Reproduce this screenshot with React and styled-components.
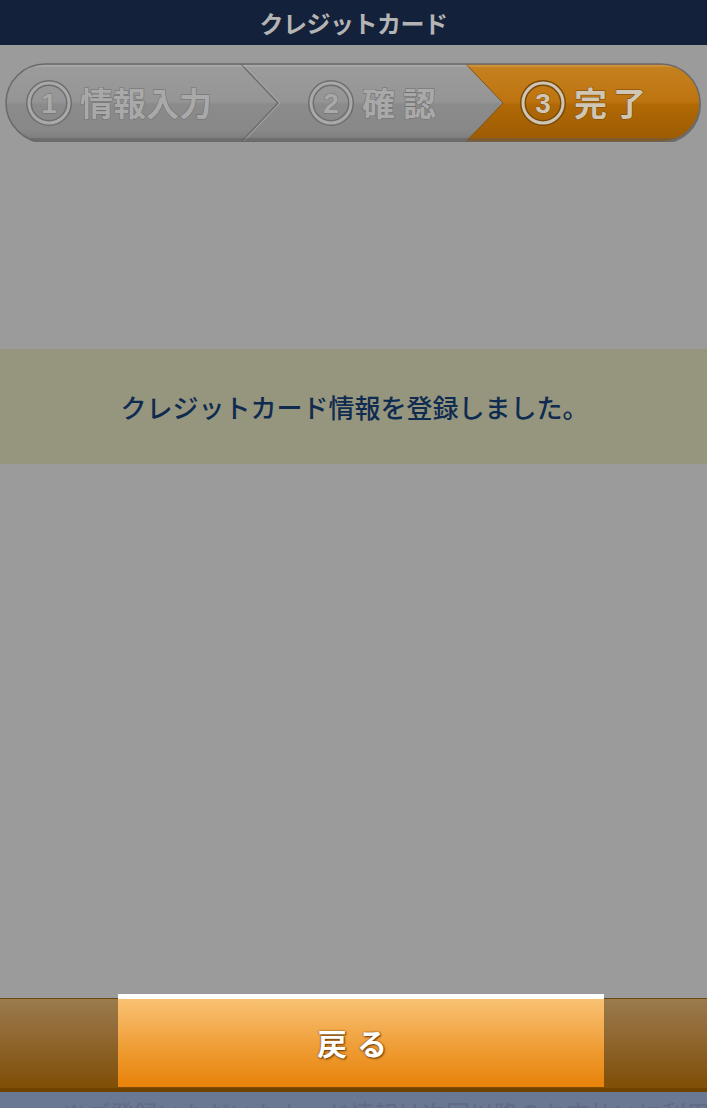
import React from "react";
import styled, { createGlobalStyle } from "styled-components";

const GlobalStyle = createGlobalStyle`
  html, body {
    margin: 0;
    padding: 0;
    background: #9b9b9b;
  }
  body {
    font-family: "Noto Sans CJK JP", "Noto Sans", sans-serif;
  }
`;

const Page = styled.div`
  display: flex;
  flex-direction: column;
  width: 707px;
  height: 1108px;
  overflow: hidden;
`;

const Header = styled.header`
  height: 45px;
  flex: none;
  display: flex;
  align-items: center;
  justify-content: center;
  background: #13213a;
  color: #b4b4b4;
  font-size: 24px;
  font-weight: 700;
  letter-spacing: -0.5px;
`;

const Content = styled.main`
  flex: none;
  height: 953px;
  box-sizing: border-box;
  display: flex;
  flex-direction: column;
  padding-top: 15px;
  background: #9b9b9b;
`;

const StepBar = styled.svg`
  display: block;
  width: 707px;
  height: 82px;
  flex: none;
`;

const Notice = styled.div`
  margin-top: 207px;
  height: 115px;
  display: flex;
  align-items: center;
  justify-content: center;
  background: #96967e;
  color: #0f2b50;
  font-size: 26px;
  font-weight: 500;
  padding-left: 2px;
`;

const Footer = styled.footer`
  flex: none;
  height: 89px;
  display: flex;
  padding-left: 118px;
  border-top: 1px solid #6a4610;
  border-bottom: 4px solid #6e4300;
  background: linear-gradient(#9b7a4c 0%, #926b36 35%, #7f4e06 100%);
`;

const BackButton = styled.button`
  width: 486px;
  height: 93px;
  margin-top: -5px;
  border: none;
  border-top: 5px solid #ffffff;
  padding: 0 8px 2px 0;
  background: linear-gradient(#f8c273 0%, #f5b158 25%, #ee9a30 60%, #e8820a 100%);
  color: #ffffff;
  font-family: "Noto Sans CJK JP", sans-serif;
  font-size: 30px;
  font-weight: 700;
  letter-spacing: 10px;
  text-shadow: 1px 1px 2px #6b3a00, 0 0 2px #7a4200;
  cursor: pointer;
`;

const Strip = styled.div`
  flex: none;
  height: 40px;
  background: #6b7893;
  color: #5f6b84;
  font-size: 24px;
  line-height: 34px;
  padding: 4px 0 0 62px;
  white-space: nowrap;
`;

const steps = [
  { n: "1", label: "情報入力", cx: 49, lx: 80, spacing: 0 },
  { n: "2", label: "確認", cx: 331, lx: 362, spacing: 8 },
  { n: "3", label: "完了", cx: 543, lx: 574, spacing: 6, active: true },
];

const Stepper = () => (
  <StepBar viewBox="0 60 707 82">
    <defs>
      <linearGradient id="gray" x1="0" y1="0" x2="0" y2="1">
        <stop offset="0" stopColor="#9c9c9c" />
        <stop offset="0.48" stopColor="#959595" />
        <stop offset="0.52" stopColor="#8b8b8b" />
        <stop offset="0.85" stopColor="#888888" />
        <stop offset="1" stopColor="#7a7a7a" />
      </linearGradient>
      <linearGradient id="orange" x1="0" y1="0" x2="0" y2="1">
        <stop offset="0" stopColor="#c58220" />
        <stop offset="0.48" stopColor="#bd7410" />
        <stop offset="0.52" stopColor="#b06905" />
        <stop offset="1" stopColor="#9c5a02" />
      </linearGradient>
      <clipPath id="pill">
        <rect x="6" y="64" width="694" height="78" rx="39" />
      </clipPath>
    </defs>
    <rect x="7" y="66" width="694" height="78" rx="39" fill="#6f6f6f" />
    <rect x="6" y="64" width="694" height="78" rx="39" fill="url(#gray)" />
    <g clipPath="url(#pill)">
      <polygon points="465,64 503,103 465,142 700,142 700,64" fill="url(#orange)" />
      <polyline points="240,63 278,103 240,143" fill="none" stroke="#6f6f6f" strokeWidth="1.5" />
      <polyline points="242,63 280,103 242,143" fill="none" stroke="#a8a8a8" strokeWidth="1" />
      <polyline points="465,63 503,103 465,143" fill="none" stroke="#7a5a2a" strokeWidth="1" />
      <rect x="6" y="65" width="694" height="2" fill="#ffffff" opacity="0.12" />
      <rect x="6" y="138" width="694" height="4" fill="#5a5a5a" opacity="0.45" />
    </g>
    <rect x="6" y="64" width="694" height="78" rx="39" fill="none" stroke="#6a6a6a" strokeWidth="1.5" />
    {steps.map((s) => {
      const light = s.active ? "#cfc6b6" : "#a9a9a9";
      const dark = s.active ? "#7a4a08" : "#6e6e6e";
      return (
        <g key={s.n}>
          <circle cx={s.cx} cy="103" r="20" fill="none" stroke={dark} strokeWidth="6" />
          <circle cx={s.cx} cy="103" r="20" fill="none" stroke={light} strokeWidth="3" />
          <text
            x={s.cx}
            y="113"
            textAnchor="middle"
            fontFamily="Liberation Sans, Arial, sans-serif"
            fontWeight="700"
            fontSize="28"
            fill={light}
            stroke={dark}
            strokeWidth="0.8"
            paintOrder="stroke"
          >
            {s.n}
          </text>
          <text
            x={s.lx}
            y="116"
            fontFamily="Noto Sans CJK JP, sans-serif"
            fontWeight="700"
            fontSize="33"
            letterSpacing={s.spacing}
            fill={light}
            stroke={dark}
            strokeWidth="1"
            paintOrder="stroke"
          >
            {s.label}
          </text>
        </g>
      );
    })}
  </StepBar>
);

export default function App() {
  return (
    <>
      <GlobalStyle />
      <Page>
        <Header>クレジットカード</Header>
        <Content>
          <Stepper />
          <Notice>クレジットカード情報を登録しました。</Notice>
        </Content>
        <Footer>
          <BackButton type="button">戻る</BackButton>
        </Footer>
        <Strip>※ご登録いただいたカード情報は次回以降のお支払いに利用されます</Strip>
      </Page>
    </>
  );
}
